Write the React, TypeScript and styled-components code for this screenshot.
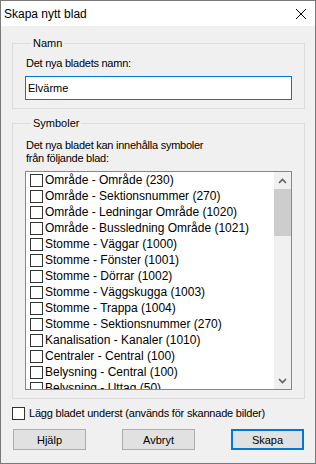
import styled, { createGlobalStyle } from "styled-components";

const GlobalStyle = createGlobalStyle`
  body {
    margin: 0;
    font-family: "Liberation Sans", Arial, sans-serif;
    color: #000;
  }
`;

const Window = styled.div`
  width: 316px;
  height: 464px;
  box-sizing: border-box;
  border: 1px solid #7a7a7a;
  background: #f0f0f0;
  display: flex;
  flex-direction: column;
`;

const TitleBar = styled.div`
  height: 25px;
  background: #fff;
  display: flex;
  align-items: center;
  justify-content: space-between;
  padding: 0 9px 0 3px;
  font-size: 12px;
`;

const Body = styled.div`
  padding: 11px 10px 0 11px;
  display: flex;
  flex-direction: column;
`;

const Group = styled.fieldset<{ gap?: number }>`
  margin: ${(p) => p.gap || 0}px 0 0 0;
  padding: 0 12px 8px 12px;
  border: 1px solid #dcdcdc;
  min-width: 0;
  display: flex;
  flex-direction: column;
`;

const Legend = styled.legend`
  margin-left: 6px;
  padding: 0 2px;
  font-size: 11px;
  line-height: 13px;
`;

const Label = styled.div<{ top: number }>`
  margin-top: ${(p) => p.top}px;
  padding-left: 1px;
  font-size: 11px;
  line-height: 13px;
  letter-spacing: -0.25px;
`;

const TextInput = styled.input`
  margin-top: 6px;
  height: 24px;
  box-sizing: border-box;
  border: 1px solid #0078d7;
  padding: 0 2px;
  font-family: inherit;
  font-size: 11px;
  outline: none;
  background: #fff;
`;

const ListBox = styled.div`
  margin-top: 6px;
  height: 219px;
  box-sizing: border-box;
  border: 1px solid #828790;
  background: #fff;
  display: flex;
`;

const Items = styled.div`
  flex: 1;
  overflow: hidden;
  padding-left: 4px;
`;

const Row = styled.div`
  height: 16px;
  display: flex;
  align-items: center;
  gap: 2px;
  font-size: 12px;
  white-space: nowrap;
`;

const Box = styled.span`
  width: 13px;
  height: 13px;
  box-sizing: border-box;
  border: 1px solid #333;
  background: #fff;
  flex: none;
`;

const ScrollBar = styled.div`
  width: 17px;
  background: #f0f0f0;
  display: flex;
  flex-direction: column;
`;

const Arrow = styled.div`
  height: 17px;
  display: flex;
  align-items: center;
  justify-content: center;
`;

const Track = styled.div`
  flex: 1;
  display: flex;
  flex-direction: column;
`;

const Thumb = styled.div`
  height: 47px;
  background: #cdcdcd;
`;

const CheckRow = styled.label`
  margin-top: 8px;
  display: flex;
  align-items: center;
  gap: 4px;
  font-size: 11px;
  line-height: 13px;
  letter-spacing: -0.2px;
`;

const ButtonRow = styled.div`
  margin-top: 9px;
  padding: 0 1px;
  display: flex;
  justify-content: space-between;
`;

const Button = styled.button<{ primary?: boolean }>`
  width: 73px;
  height: 21px;
  box-sizing: border-box;
  border: ${(p) => (p.primary ? "2px solid #0078d7" : "1px solid #adadad")};
  background: #e1e1e1;
  font-family: inherit;
  font-size: 11px;
  padding: 0;
  color: #000;
`;

const items = [
  "Område - Område (230)",
  "Område - Sektionsnummer (270)",
  "Område - Ledningar Område (1020)",
  "Område - Bussledning Område (1021)",
  "Stomme - Väggar (1000)",
  "Stomme - Fönster (1001)",
  "Stomme - Dörrar (1002)",
  "Stomme - Väggskugga (1003)",
  "Stomme - Trappa (1004)",
  "Stomme - Sektionsnummer (270)",
  "Kanalisation - Kanaler (1010)",
  "Centraler - Central (100)",
  "Belysning - Central (100)",
  "Belysning - Uttag (50)",
];

function Chevron({ up }: { up?: boolean }) {
  return (
    <svg width="9" height="6" viewBox="0 0 9 6">
      <path
        d={up ? "M1 5 L4.5 1.5 L8 5" : "M1 1 L4.5 4.5 L8 1"}
        fill="none"
        stroke="#606060"
        strokeWidth="1.6"
      />
    </svg>
  );
}

export default function App() {
  return (
    <>
      <GlobalStyle />
      <Window>
        <TitleBar>
          <span>Skapa nytt blad</span>
          <svg width="10" height="10" viewBox="0 0 10 10">
            <path d="M0 0 L10 10 M10 0 L0 10" stroke="#000" strokeWidth="1" />
          </svg>
        </TitleBar>
        <Body>
          <Group>
            <Legend>Namn</Legend>
            <Label top={7}>Det nya bladets namn:</Label>
            <TextInput defaultValue="Elvärme" />
          </Group>
          <Group gap={8}>
            <Legend>Symboler</Legend>
            <Label top={9}>
              Det nya bladet kan innehålla symboler
              <br />
              från följande blad:
            </Label>
            <ListBox>
              <Items>
                {items.map((t) => (
                  <Row key={t}>
                    <Box />
                    {t}
                  </Row>
                ))}
              </Items>
              <ScrollBar>
                <Arrow>
                  <Chevron up />
                </Arrow>
                <Track>
                  <Thumb />
                </Track>
                <Arrow>
                  <Chevron />
                </Arrow>
              </ScrollBar>
            </ListBox>
          </Group>
          <CheckRow>
            <Box />
            Lägg bladet underst (används för skannade bilder)
          </CheckRow>
          <ButtonRow>
            <Button>Hjälp</Button>
            <Button>Avbryt</Button>
            <Button primary>Skapa</Button>
          </ButtonRow>
        </Body>
      </Window>
    </>
  );
}
